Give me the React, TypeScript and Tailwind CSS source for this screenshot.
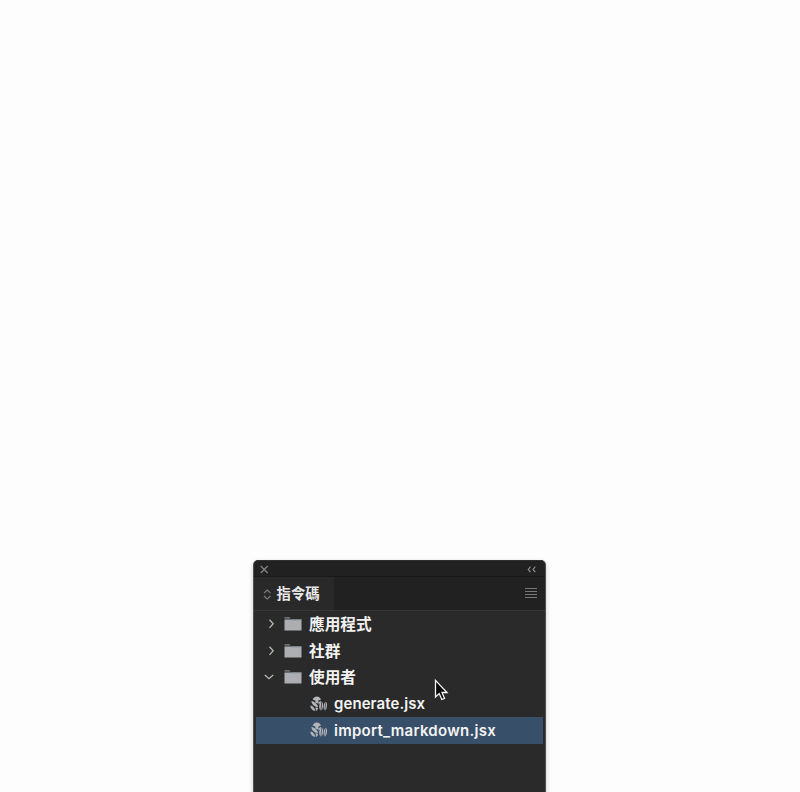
import React from "react";

const CJK = "font-['Noto_Sans_CJK_TC','Noto_Sans',sans-serif]";

function Chevron({ open }: { open?: boolean }) {
  return (
    <svg className="h-3 w-3 shrink-0" viewBox="0 0 12 12" fill="none" stroke="#b8b8b8" strokeWidth="1.3">
      <path d={open ? "M1.8 4 L6 7.7 L10.2 4" : "M5.5 1.8 L9.2 5.8 L5.5 9.9"} />
    </svg>
  );
}

function FolderIcon() {
  return (
    <svg className="h-[14px] w-[18px] shrink-0" viewBox="0 0 18 14">
      <path d="M0.5 0.2 H5.5 L6.5 1.6 H0.5 Z" fill="#85898d" />
      <path d="M0.5 2.5 H17.5 V13.5 H0.5 Z" fill="#adaeb1" />
      <path d="M7 2.5 H17.5 V3.4 H7 Z" fill="#8996a0" />
    </svg>
  );
}

function ScriptIcon() {
  return (
    <svg className="h-4 w-[18px] shrink-0" viewBox="0 0 18 16" fill="#b3b5b8">
      <path d="M2.6 3.6 C3.6 1.4 5 .4 6.8 .4 C8.6 .4 10.2 1.6 11 3.6 L8.4 4.6 H5 Z" />
      <path d="M5.4 4 H8.3 V7.6 L5.4 6.8 Z" />
      <path d="M1.4 4.9 C4.6 5.6 7.8 7.8 8 11.2 C5 10.8 1.6 8.6 1.4 4.9 Z" />
      <path d="M8.4 6.3 L11 4.7 C10.9 6.3 10 7.8 8.7 8.4 Z" />
      <path d="M.3 9.4 C2.8 9.8 5 11.8 5.1 14.8 C2.6 14.5 .4 12.6 .3 9.4 Z" />
      <path d="M5.6 11.2 L8 12 C8 13.4 7.2 14.6 5.8 14.9 Z" />
      <path d="M11.7 5.6 C9 6.8 8.3 12 10.6 14.8 C10.6 11.6 11 8.6 11.7 5.6 Z" />
      <path d="M12.4 5.8 C13.7 8.6 13.2 12.6 11.5 14.8 C11.3 12 11.7 8.8 12.4 5.8 Z" />
      <path d="M15.8 5.6 C13.5 7.2 13 12 14.5 14.6 C14.6 11.6 15.1 8.6 15.8 5.6 Z" />
      <path d="M16.4 5.8 C17.6 8.6 17.1 12.4 15.2 14.8 C15.1 12 15.7 8.8 16.4 5.8 Z" />
    </svg>
  );
}

function FolderRow({ label, open }: { label: string; open?: boolean }) {
  return (
    <div className="flex h-[26.5px] items-center">
      <div className={open ? "ml-[7px] mr-[9px]" : "ml-2 mr-2"}>
        <Chevron open={open} />
      </div>
      <FolderIcon />
      <span className={`${CJK} ml-[7px] text-[15.7px] font-bold leading-6 text-[#f2f2f2]`}>{label}</span>
    </div>
  );
}

function FileRow({ name, selected }: { name: string; selected?: boolean }) {
  return (
    <div className={`flex h-[26.5px] items-center pl-[54px] ${selected ? "bg-[#384f69]" : ""}`}>
      <ScriptIcon />
      <span
        className={`ml-[6px] pt-px font-['Inter',sans-serif] text-[15px] font-semibold leading-6 text-[#f4f4f4] ${selected ? "tracking-[0.26px]" : "tracking-[0.08px]"}`}
      >
        {name}
      </span>
    </div>
  );
}

export default function App() {
  return (
    <div className="relative flex h-[792px] w-[800px] flex-col overflow-hidden bg-[#fdfdfd] pl-[253px] pt-[560px]">
      <div className="flex h-[232px] w-[293px] shrink-0 flex-col rounded-t-[5px] border-x border-t border-x-[#505050] border-t-[#303030] bg-[#2a2a2a] shadow-[0_2px_5px_rgba(0,0,0,0.22)]">
        <div className="flex h-4 shrink-0 items-center justify-between rounded-t-[4px] border-b border-[#191919] bg-[#212121] pl-[6px] pr-[9px]">
          <svg className="mt-[2px] h-[9px] w-[9px]" viewBox="0 0 9 9" stroke="#8a8a8a" strokeWidth="1.1">
            <path d="M.7 1 L7.7 8 M7.7 1 L.7 8" />
          </svg>
          <svg className="mt-[2px] h-[7px] w-[9px]" viewBox="0 0 9 7" fill="none" stroke="#929292" strokeWidth="1.1">
            <path d="M3.5 .6 L1.2 3.4 L3.5 6.2 M8.3 .6 L6 3.4 L8.3 6.2" />
          </svg>
        </div>
        <div className="flex h-[34px] shrink-0 items-center justify-between border-b border-[#373737] bg-[#212121] pr-[8px]">
          <div className="flex h-full w-20 items-center bg-[#292929] pl-[9px]">
            <svg className="mt-[2px] h-[11px] w-[9px] shrink-0" viewBox="0 0 9 11" fill="none" stroke="#7c7c7c" strokeWidth="1.1">
              <path d="M1 4 L4.2 1 L7.4 4 M1 7 L4.2 10 L7.4 7" />
            </svg>
            <span className={`${CJK} -mt-px ml-[4.5px] whitespace-nowrap text-[14.4px] font-bold leading-6 text-[#e8e8e8]`}>指令碼</span>
          </div>
          <div className="flex -translate-y-px flex-col gap-[2px]">
            <div className="h-px w-3 bg-[#777777]" />
            <div className="h-px w-3 bg-[#777777]" />
            <div className="h-px w-3 bg-[#777777]" />
            <div className="h-px w-3 bg-[#777777]" />
          </div>
        </div>
        <div className="flex flex-col px-[2px]">
          <FolderRow label="應用程式" />
          <FolderRow label="社群" />
          <FolderRow label="使用者" open />
          <FileRow name="generate.jsx" />
          <FileRow name="import_markdown.jsx" selected />
        </div>
      </div>
      <svg className="absolute left-[434px] top-[678px] h-6 w-4" viewBox="0 0 16 24">
        <path d="M1.5 2.4 V19 L5.2 15.6 L7.8 21.5 L10.5 20.3 L8 14.5 H13 Z" fill="#080808" stroke="#f5f5f5" strokeWidth="1.3" />
      </svg>
    </div>
  );
}
